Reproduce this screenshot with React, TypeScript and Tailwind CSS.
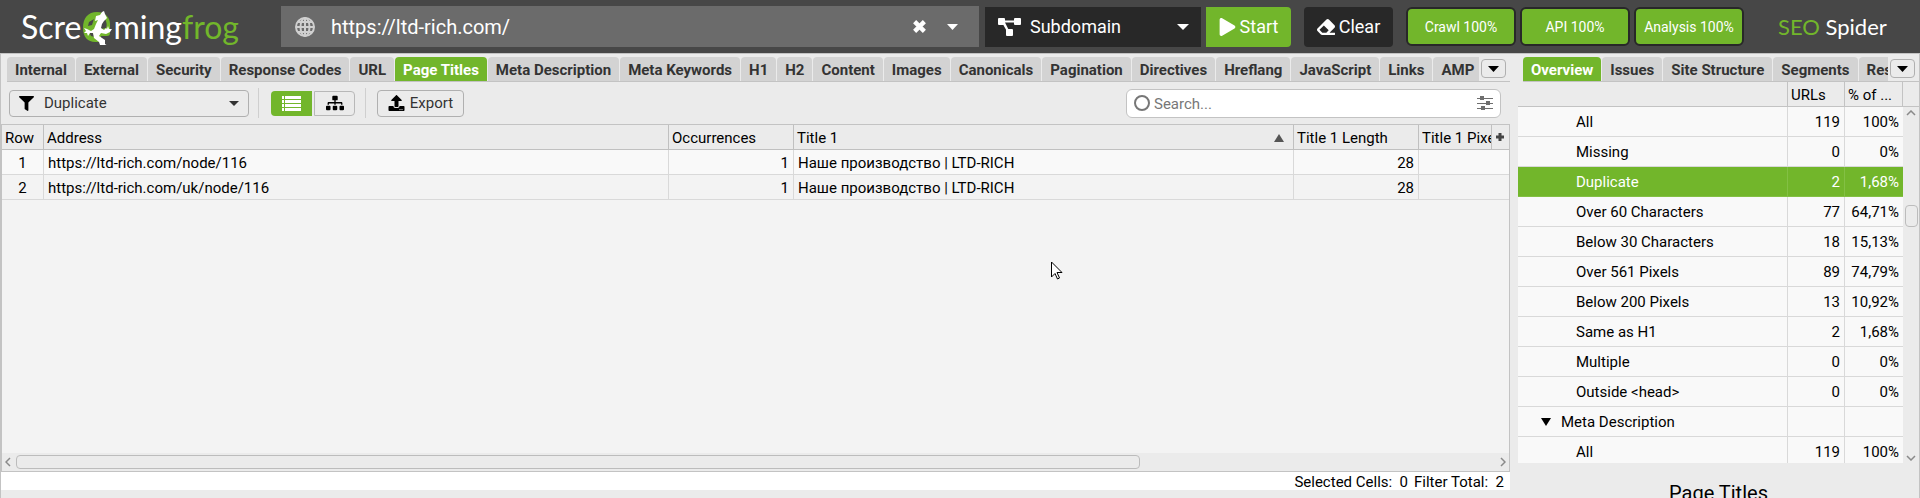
import { useState } from "react";
import { FaEraser, FaFilter, FaPlay, FaSitemap, FaUpload } from "react-icons/fa";

const mainTabs = [
  "Internal",
  "External",
  "Security",
  "Response Codes",
  "URL",
  "Page Titles",
  "Meta Description",
  "Meta Keywords",
  "H1",
  "H2",
  "Content",
  "Images",
  "Canonicals",
  "Pagination",
  "Directives",
  "Hreflang",
  "JavaScript",
  "Links",
  "AMP",
];

const sideTabs = ["Overview", "Issues", "Site Structure", "Segments", "Response Times"];

const pages = [
  { address: "https://ltd-rich.com/node/116", occurrences: 1, title: "Наше производство | LTD-RICH", length: 28 },
  { address: "https://ltd-rich.com/uk/node/116", occurrences: 1, title: "Наше производство | LTD-RICH", length: 28 },
];

const overview = [
  { name: "All", urls: "119", percent: "100%" },
  { name: "Missing", urls: "0", percent: "0%" },
  { name: "Duplicate", urls: "2", percent: "1,68%" },
  { name: "Over 60 Characters", urls: "77", percent: "64,71%" },
  { name: "Below 30 Characters", urls: "18", percent: "15,13%" },
  { name: "Over 561 Pixels", urls: "89", percent: "74,79%" },
  { name: "Below 200 Pixels", urls: "13", percent: "10,92%" },
  { name: "Same as H1", urls: "2", percent: "1,68%" },
  { name: "Multiple", urls: "0", percent: "0%" },
  { name: "Outside <head>", urls: "0", percent: "0%" },
  { name: "Meta Description", group: true, urls: "", percent: "" },
  { name: "All", urls: "119", percent: "100%" },
];

function Caret({ className }: { className?: string }) {
  return (
    <svg viewBox="0 0 12 6" preserveAspectRatio="none" className={className} fill="currentColor" aria-hidden="true">
      <path d="M0 0h12L6 6z" />
    </svg>
  );
}

function Chevron({ className }: { className?: string }) {
  return (
    <svg viewBox="0 0 10 6" className={className} fill="none" stroke="#8a8a8a" strokeWidth="1.5" aria-hidden="true">
      <path d="M1 1l4 4 4-4" />
    </svg>
  );
}

function Logo() {
  return (
    <div className="flex w-[281px] shrink-0 items-center pl-[21px] font-[Lato] text-[32px] leading-[36px] text-white">
      <span>Scre</span>
      <svg viewBox="0 0 32 36" className="h-9 w-8 shrink-0" aria-hidden="true">
        <path
          d="M16 3c8 0 13 5 13 12v9c0 2-1 3-3 3h-6v5c-2 1-4 1-6 1-7 0-12-5-12-14C2 9 7 3 16 3z"
          fill="#72b62b"
        />
        <path d="M20 12l4-2c2 3 2 7 1 9l-5 1zM8 13l5-3-2 6-4 1zM8 23l3 0 3 5-4-1z" fill="#474747" />
        <path
          fill="#fff"
          d="M15 7l4-1 2-3 2-1 1 3 2 4-3 3-2 3-1 4 3 2 2-2 1 1 1-3 1 3 3 0-2 3-4 2-5-1-2 3 3 2 3 2 0 4 3 2-3 0 1 2-8 0 2-3-1-3-5-4-1-5-3 0-2 3-1-3-3 0 2-2-2-3 3 1 4 2 3-2 2-5 2-4-3 1z"
        />
      </svg>
      <span>
        ming<span className="text-[#72b62b]">frog</span>
      </span>
    </div>
  );
}

interface TabsProps {
  tabs: string[];
  initial: string;
  label: string;
}

function Tabs({ tabs, initial, label }: TabsProps) {
  const [active, setActive] = useState(initial);

  return (
    <div className="flex h-7 border-b border-[#c3c3c3] pt-[3px]">
      <div role="tablist" aria-label={label} className="flex min-w-0 flex-1 gap-px overflow-hidden">
        {tabs.map((tab) => (
          <button
            key={tab}
            role="tab"
            aria-selected={tab === active}
            onClick={() => setActive(tab)}
            className={`h-6 shrink-0 rounded-t px-2 pt-[2px] font-bold whitespace-nowrap ${
              tab === active ? "bg-[#72b62b] text-white" : "bg-[#d3d3d3] text-[#333]"
            }`}
          >
            {tab}
          </button>
        ))}
      </div>
      <button
        aria-label="More tabs"
        className="mt-[2px] mr-1 ml-[2px] flex h-[19px] w-[25px] items-center justify-center rounded border border-[#b0b0b0]"
      >
        <Caret className="h-[6px] w-[11px]" />
      </button>
    </div>
  );
}

function Header() {
  return (
    <header className="flex h-[53px] shrink-0 items-center bg-[#474747] text-white">
      <Logo />
      <div className="flex h-[41px] min-w-0 flex-1 items-center bg-[#6b6b6b] pr-[21px] pl-[14px]">
        <svg viewBox="0 0 20 20" className="h-5 w-5 shrink-0" fill="none" stroke="#d0d0d0" strokeWidth="2" aria-hidden="true">
          <circle cx="10" cy="10" r="9" />
          <ellipse cx="10" cy="10" rx="4.500" ry="9" />
          <path d="M10 1v18M1 10h18M2.500 5h15M2.500 15h15" />
        </svg>
        <input
          aria-label="URL to spider"
          defaultValue="https://ltd-rich.com/"
          className="ml-4 min-w-0 flex-1 bg-transparent text-[20px] outline-none"
        />
        <button aria-label="Clear URL">
          <svg viewBox="0 0 12 12" className="h-[13px] w-[13px]" stroke="#fff" strokeWidth="4" aria-hidden="true">
            <path d="M1.500 1.500l9 9M10.500 1.500l-9 9" />
          </svg>
        </button>
        <button aria-label="Recent URLs" className="ml-[21px]">
          <Caret className="h-[6px] w-[11px]" />
        </button>
      </div>
      <button className="ml-[6px] flex h-10 w-[216px] items-center bg-[#282828] pr-3 pl-[13px] text-[18px]">
        <svg viewBox="0 0 24 18" className="h-[18px] w-6" fill="#fff" aria-hidden="true">
          <rect x="0" y="0" width="7" height="7" rx="1" />
          <rect x="16" y="0" width="7" height="7" rx="1" />
          <rect x="8" y="11" width="7" height="7" rx="1" />
          <path d="M5 2.500h13v2H7l4 8-2 1-5-9z" />
        </svg>
        <span className="ml-2 flex-1 text-left">Subdomain</span>
        <Caret className="h-[6px] w-3" />
      </button>
      <button className="ml-[5px] flex h-10 w-[85px] items-center justify-center gap-1 rounded-r bg-[#72b62b] text-[18px]">
        <FaPlay className="h-[18px] w-[17px]" />
        Start
      </button>
      <button className="ml-[13px] flex h-10 w-[89px] items-center justify-center gap-1 rounded bg-[#282828] text-[18px]">
        <FaEraser className="h-[18px] w-[18px]" />
        Clear
      </button>
      <div className="ml-[13px] flex gap-1">
        {["Crawl 100%", "API 100%", "Analysis 100%"].map((text) => (
          <div
            key={text}
            className="flex h-[39px] w-[110px] items-center justify-center rounded-md border-2 border-[#282828] bg-[#72b62b] text-sm"
          >
            {text}
          </div>
        ))}
      </div>
      <div className="w-[176px] shrink-0 pl-[34px] font-[Lato] text-[22px]">
        <span className="text-[#72b62b]">SEO</span> Spider
      </div>
    </header>
  );
}

function Toolbar() {
  const [view, setView] = useState("list");

  return (
    <div className="flex h-[42px] items-center pr-[9px] pl-2 text-[#333]">
      <div className="relative h-[27px] w-60">
        <select
          aria-label="Filter"
          className="h-full w-full appearance-none rounded border border-[#b0b0b0] bg-[#ebebeb] pl-[34px] outline-none"
        >
          <option>Duplicate</option>
        </select>
        <FaFilter className="pointer-events-none absolute top-[6px] left-[10px] h-[15px] w-[15px] text-black" />
        <Caret className="pointer-events-none absolute top-[11px] right-[10px] h-[5px] w-[10px]" />
      </div>
      <div className="ml-[9px] h-[30px] w-px bg-[#cfcfcf]" />
      <button
        aria-label="List view"
        onClick={() => setView("list")}
        className={`ml-3 flex h-[25px] w-[41px] items-center justify-center rounded-l ${
          view === "list" ? "bg-[#72b62b] text-white" : "border border-[#b8b8b8] text-black"
        }`}
      >
        <svg viewBox="0 0 19 15" className="h-[15px] w-[19px]" fill="currentColor" aria-hidden="true">
          <path d="M0 0h2v3H0zM3 0h16v3H3zM0 4h2v3H0zM3 4h16v3H3zM0 8h2v3H0zM3 8h16v3H3zM0 12h2v3H0zM3 12h16v3H3z" />
        </svg>
      </button>
      <button
        aria-label="Tree view"
        onClick={() => setView("tree")}
        className={`ml-[2px] flex h-[25px] w-[41px] items-center justify-center rounded-r ${
          view === "tree" ? "bg-[#72b62b] text-white" : "border border-[#b8b8b8] text-black"
        }`}
      >
        <FaSitemap className="h-[18px] w-[18px]" />
      </button>
      <div className="ml-[10px] h-[30px] w-px bg-[#cfcfcf]" />
      <button className="ml-[11px] flex h-[27px] w-[87px] items-center justify-center gap-[5px] rounded border border-[#b0b0b0]">
        <FaUpload className="h-4 w-[17px] text-black" />
        Export
      </button>
      <div className="ml-auto flex h-[29px] w-[375px] items-center rounded-md border border-[#c3c3c3] bg-white px-[7px]">
        <svg viewBox="0 0 16 16" className="h-4 w-4 shrink-0" fill="none" stroke="#777" strokeWidth="2" aria-hidden="true">
          <circle cx="8" cy="8" r="7" />
        </svg>
        <input
          type="search"
          aria-label="Search"
          placeholder="Search..."
          className="ml-1 min-w-0 flex-1 bg-transparent pt-px outline-none placeholder:text-[#777]"
        />
        <button aria-label="Search options">
          <svg viewBox="0 0 16 15" className="h-[15px] w-4" fill="#6f6f6f" aria-hidden="true">
            <path d="M0 2h16v1H0zM0 7h16v1H0zM0 12h16v1H0zM3 0h4v4H3zM9 5h4v4H9zM4 10h4v4H4z" />
          </svg>
        </button>
      </div>
    </div>
  );
}

function PagesTable() {
  const th =
    "h-[25px] overflow-hidden border-r border-b border-[#c0c0c0] px-[3px] pt-[2px] text-left font-normal whitespace-nowrap";
  const td = "h-[25px] border-r border-b border-[#d9d9d9] px-1 pt-[2px]";

  return (
    <div className="relative flex min-h-0 flex-1 flex-col border border-[#c3c3c3] bg-[#f3f3f3]">
      <table className="w-full table-fixed border-separate border-spacing-0">
        <colgroup>
          <col className="w-[42px]" />
          <col />
          <col className="w-[125px]" />
          <col className="w-[500px]" />
          <col className="w-[125px]" />
          <col className="w-[90px]" />
        </colgroup>
        <thead className="bg-[#ebebeb]">
          <tr>
            <th className={th}>Row</th>
            <th className={th}>Address</th>
            <th className={th}>Occurrences</th>
            <th className={th} aria-sort="ascending">
              <div className="flex items-center justify-between pr-[6px]">
                Title 1
                <Caret className="h-2 w-[10px] rotate-180 text-[#555]" />
              </div>
            </th>
            <th className={th}>Title 1 Length</th>
            <th className="h-[25px] border-b border-[#c0c0c0] pl-[3px] text-left font-normal whitespace-nowrap">
              <div className="flex h-6 items-center">
                <span className="min-w-0 flex-1 overflow-hidden pt-[2px]">Title 1 Pixel Width</span>
                <button
                  aria-label="Add column"
                  className="flex h-6 w-[18px] items-center border-l border-[#c0c0c0] pl-1"
                >
                  <svg viewBox="0 0 8 8" className="h-2 w-2" stroke="#444" strokeWidth="3" aria-hidden="true">
                    <path d="M4 0v8M0 4h8" />
                  </svg>
                </button>
              </div>
            </th>
          </tr>
        </thead>
        <tbody>
          {pages.map((page, i) => (
            <tr key={page.address} className={i % 2 === 0 ? "bg-[#f9f9f9]" : "bg-[#f3f3f3]"}>
              <td className={`${td} text-center`}>{i + 1}</td>
              <td className={td}>{page.address}</td>
              <td className={`${td} text-right`}>{page.occurrences}</td>
              <td className={td}>{page.title}</td>
              <td className={`${td} text-right`}>{page.length}</td>
              <td className="border-b border-[#d9d9d9]" />
            </tr>
          ))}
        </tbody>
      </table>

      {/* horizontal scroll bar */}
      <div className="mt-auto flex h-[18px] items-center bg-[#ebebeb] px-px">
        <Chevron className="h-[6px] w-[10px] rotate-90" />
        <div className="mx-[3px] flex-1">
          <div className="h-[14px] w-[76%] rounded border border-[#bcbcbc]" />
        </div>
        <Chevron className="h-[6px] w-[10px] -rotate-90" />
      </div>

      {/* mouse pointer */}
      <svg viewBox="0 0 12 19" className="absolute top-[136px] left-[1049px] h-[19px] w-3" aria-hidden="true">
        <path d="M.5 1v15l3.500-3.500 2.500 5.500 2-1-2.500-5.500h5z" fill="#fff" stroke="#000" />
      </svg>
    </div>
  );
}

function OverviewTable() {
  const [selected, setSelected] = useState(2);

  return (
    <div className="flex h-[381px] shrink-0 overflow-hidden">
      <table className="h-max min-w-0 flex-1 table-fixed border-separate border-spacing-0">
        <colgroup>
          <col />
          <col className="w-[57px]" />
          <col className="w-[58px]" />
        </colgroup>
        <thead>
          <tr>
            <th className="h-[25px] border-r border-b border-[#c3c3c3]" aria-label="Name" />
            <th className="border-r border-b border-[#c3c3c3] px-[3px] pt-[2px] text-left font-normal">URLs</th>
            <th className="border-r border-b border-[#c3c3c3] px-[3px] pt-[2px] text-left font-normal whitespace-nowrap">
              % of ...
            </th>
          </tr>
        </thead>
        <tbody>
          {overview.map((row, i) => {
            const td = `h-[30px] border-b ${i === selected ? "border-[#83c044]" : "border-[#d9d9d9]"}`;
            return (
              <tr
                key={i}
                onClick={() => setSelected(i)}
                className={i === selected ? "bg-[#72b62b] text-white" : "bg-[#f9f9f9]"}
              >
                <td className={`${td} border-r ${row.group ? "pl-[23px]" : "pl-[58px]"}`}>
                  <div className="flex items-center">
                    {row.group && <Caret className="mr-[10px] h-2 w-[10px]" />}
                    {row.name}
                  </div>
                </td>
                <td className={`${td} border-r pr-1 text-right`}>{row.urls}</td>
                <td className={`${td} pr-1 text-right`}>{row.percent}</td>
              </tr>
            );
          })}
        </tbody>
      </table>
      {/* vertical scroll bar */}
      <div className="flex w-4 flex-col items-center">
        <div className="h-[25px] w-full border-b border-[#c3c3c3]" />
        <Chevron className="mt-[3px] h-[6px] w-[10px] rotate-180" />
        <div className="mt-[89px] h-[22px] w-[13px] rounded border border-[#bcbcbc]" />
        <Chevron className="mt-auto mb-[2px] h-[6px] w-[10px]" />
      </div>
    </div>
  );
}

export default function App() {
  return (
    <div className="flex h-screen flex-col overflow-hidden bg-[#ebebeb] font-[Roboto,sans-serif] text-[15px] leading-5 text-black">
      <Header />
      <div className="flex min-h-0 flex-1 border-x border-t border-[#c3c3c3]">
        <main className="flex min-w-0 flex-1 flex-col pb-2">
          <div className="pl-[6px]">
            <Tabs tabs={mainTabs} initial="Page Titles" label="Reports" />
          </div>
          <Toolbar />
          <PagesTable />
          <div className="flex h-[18px] items-center justify-end gap-[6px] bg-white pt-[2px] pr-[6px]">
            <span>Selected Cells:&nbsp; 0</span>
            <span>Filter Total:&nbsp; 2</span>
          </div>
        </main>
        <aside className="ml-2 flex w-[401px] shrink-0 flex-col">
          <div className="pl-[5px]">
            <Tabs tabs={sideTabs} initial="Overview" label="Side panel" />
          </div>
          <OverviewTable />
          <h2 className="mt-4 text-center text-[20px] leading-[28px]">Page Titles</h2>
        </aside>
      </div>
    </div>
  );
}
